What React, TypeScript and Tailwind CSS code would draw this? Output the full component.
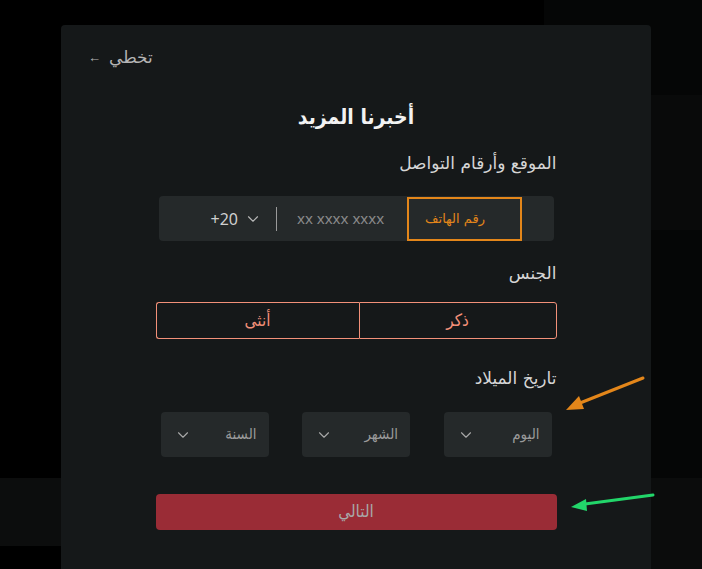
import React from "react";
import { ChevronDown } from "lucide-react";

const font = { fontFamily: "'DejaVu Sans', sans-serif" };
const cond = { fontFamily: "'DejaVu Sans Condensed', 'DejaVu Sans', sans-serif" };
const latin = { fontFamily: "'Noto Sans', 'Open Sans', sans-serif" };

function Select({ label }: { label: string }) {
  return (
    <div className="flex h-[45px] w-[108px] items-center justify-between rounded-[4px] bg-[#25292a] pl-[13px] pr-[12px]" dir="ltr">
      <ChevronDown size={18} strokeWidth={1.5} className="text-[#a8a8a8]" />
      <span className="text-[15px] text-[#9a9a9a]" style={cond}>{label}</span>
    </div>
  );
}

export default function App() {
  return (
    <div className="relative min-h-[569px] w-[702px] overflow-hidden bg-black" style={font}>
      {/* background decoration */}
      <div className="absolute right-0 top-0 h-full w-[158px] bg-[#050606]" />
      <div className="absolute right-0 top-[95px] h-[135px] w-[60px] bg-[#090a0a]" />
      <div className="absolute right-0 top-[478px] h-[91px] w-[60px] bg-[#0b0c0c]" />
      <div className="absolute left-0 top-[478px] h-[68px] w-[61px] bg-[#0c0d0d]" />

      <div className="relative flex justify-start pl-[61px] pt-[25px]">
        <div className="flex h-[544px] w-[590px] flex-col items-center rounded-t-[4px] bg-[#151819] pt-[20px]" dir="rtl">
          <div className="flex h-[24px] w-full justify-end pl-[27px]">
            <span className="flex items-center gap-[8px] text-[17px] leading-[24px] text-[#b4b4b4]">
              <span>تخطي</span>
              <span className="text-[13px]" style={latin}>←</span>
            </span>
          </div>

          <h1 className="mt-[32px] h-[32px] text-[21px] font-bold leading-[32px] text-[#f2f2f2]" style={cond}>أخبرنا المزيد</h1>

          <div className="flex w-[401px] flex-col">
            <div className="mt-[18px] h-[24px] text-[17px] leading-[24px] text-[#d6d6d6]">الموقع وأرقام التواصل</div>

            <div className="mx-[3px] mt-[21px] flex h-[45px] items-center rounded-[4px] bg-[#25292a]" dir="ltr">
              <div className="flex items-center pl-[52px]" style={latin}>
                <span className="text-[16px] text-[#d0d0d0]">+20</span>
                <ChevronDown size={18} strokeWidth={1.5} className="ml-[6px] text-[#b8b8b8]" />
                <div className="ml-[14px] h-[24px] w-px bg-[#9a9a9a]" />
                <span className="ml-[20px] text-[15px] text-[#8a8a8a]">xx xxxx xxxx</span>
              </div>
              <div className="ml-auto mr-[32px] flex h-[44px] w-[115px] items-center justify-center border-2 border-[#e3861a] pr-[18px] text-[13px] text-[#e3861a]" dir="rtl">
                رقم الهاتف
              </div>
            </div>

            <div className="mt-[20px] h-[24px] text-[17px] leading-[24px] text-[#d6d6d6]">الجنس</div>

            <div className="mt-[17px] flex h-[37px]">
              <button className="flex h-full w-[198px] items-center justify-center rounded-r-[3px] border border-[#f29079] text-[17px] text-[#f29079]" style={cond}>ذكر</button>
              <button className="flex h-full w-[203px] items-center justify-center rounded-l-[3px] border border-r-0 border-[#f29079] text-[17px] text-[#f29079]" style={cond}>أنثى</button>
            </div>

            <div className="mt-[27px] h-[24px] text-[17px] leading-[24px] text-[#d6d6d6]">تاريخ الميلاد</div>

            <div className="mt-[22px] flex justify-between px-[5px]">
              <Select label="اليوم" />
              <Select label="الشهر" />
              <Select label="السنة" />
            </div>

            <button className="mt-[37px] flex h-[36px] w-full items-center justify-center rounded-[4px] bg-[#9a2c36] text-[17px] text-[#a8a8a8]" style={cond}>التالي</button>
          </div>
        </div>
      </div>

      {/* annotation arrows */}
      <svg className="absolute left-0 top-0" width="702" height="569" viewBox="0 0 702 569">
        <line x1="643" y1="378" x2="580" y2="403" stroke="#e3861a" strokeWidth="3" strokeLinecap="round" />
        <polygon points="566,410 579,396 584,409" fill="#e3861a" />
        <line x1="653" y1="495" x2="585" y2="504" stroke="#22d66a" strokeWidth="3" strokeLinecap="round" />
        <polygon points="571,507 586,499 587,511" fill="#22d66a" />
      </svg>
    </div>
  );
}
